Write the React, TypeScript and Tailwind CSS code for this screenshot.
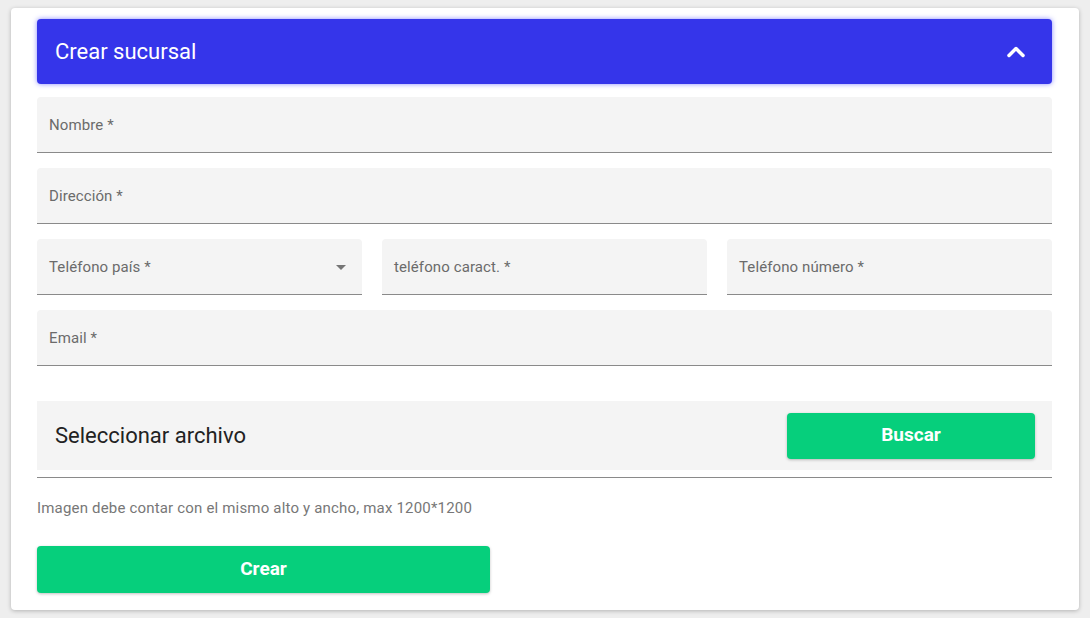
import { ChevronUp } from "lucide-react";

const fieldBox =
  "h-[56px] flex items-center justify-between bg-[#f4f4f4] rounded-t-[4px] border-b border-[#8a8a8a] px-3 pt-[2px] text-[15px] tracking-[0.1px] text-[#6b6b6b]";

function Field({ label, select }: { label: string; select?: boolean }) {
  return (
    <div className={fieldBox}>
      <span>{label}</span>
      {select && (
        <svg width="10" height="5" viewBox="0 0 10 5" className="mr-[4px]">
          <path d="M0 0 L10 0 L5 5 Z" fill="#757575" />
        </svg>
      )}
    </div>
  );
}

export default function App() {
  return (
    <div
      className="min-h-[618px] bg-[#eeeeee] px-[11px] pt-[8px] pb-[8px]"
      style={{ fontFamily: "Roboto, 'Noto Sans', sans-serif" }}
    >
      <div className="bg-white rounded-[4px] shadow-[0_1px_4px_rgba(0,0,0,0.25)] pl-[26px] pr-[27px] pt-[11px] pb-[17px]">
        {/* collapsible header */}
        <div className="h-[65px] flex items-center justify-between bg-[#3535ea] rounded-[4px] pl-[18px] pr-[22px] shadow-[0_0_5px_rgba(60,60,255,0.6)]">
          <h2 className="text-white text-[22px] leading-none">Crear sucursal</h2>
          <ChevronUp className="w-[28px] h-[28px] text-white" strokeWidth={3} />
        </div>

        <div className="mt-[13px] flex flex-col gap-[15px]">
          <Field label="Nombre *" />
          <Field label="Dirección *" />
          <div className="grid grid-cols-3 gap-[20px]">
            <Field label="Teléfono país *" select />
            <Field label="teléfono caract. *" />
            <Field label="Teléfono número *" />
          </div>
          <Field label="Email *" />
        </div>

        {/* file picker */}
        <div className="mt-[35px] h-[69px] bg-[#f4f4f4] flex items-center justify-between pl-[18px] pr-[17px]">
          <span className="text-[22px] text-[#222]">Seleccionar archivo</span>
          <button className="w-[248px] h-[46px] rounded-[4px] bg-[#06cf7c] text-white font-bold text-[19px] shadow-[0_1px_3px_rgba(0,0,0,0.25)]">
            Buscar
          </button>
        </div>
        <div className="mt-[7px] border-b border-[#8a8a8a]" />
        <p className="mt-[21px] text-[15px] tracking-[0.18px] text-[#777] leading-[18px]">
          Imagen debe contar con el mismo alto y ancho, max 1200*1200
        </p>

        <button className="mt-[29px] w-[453px] h-[47px] rounded-[4px] bg-[#06cf7c] text-white font-bold text-[19px] shadow-[0_1px_3px_rgba(0,0,0,0.25)]">
          Crear
        </button>
      </div>
    </div>
  );
}
